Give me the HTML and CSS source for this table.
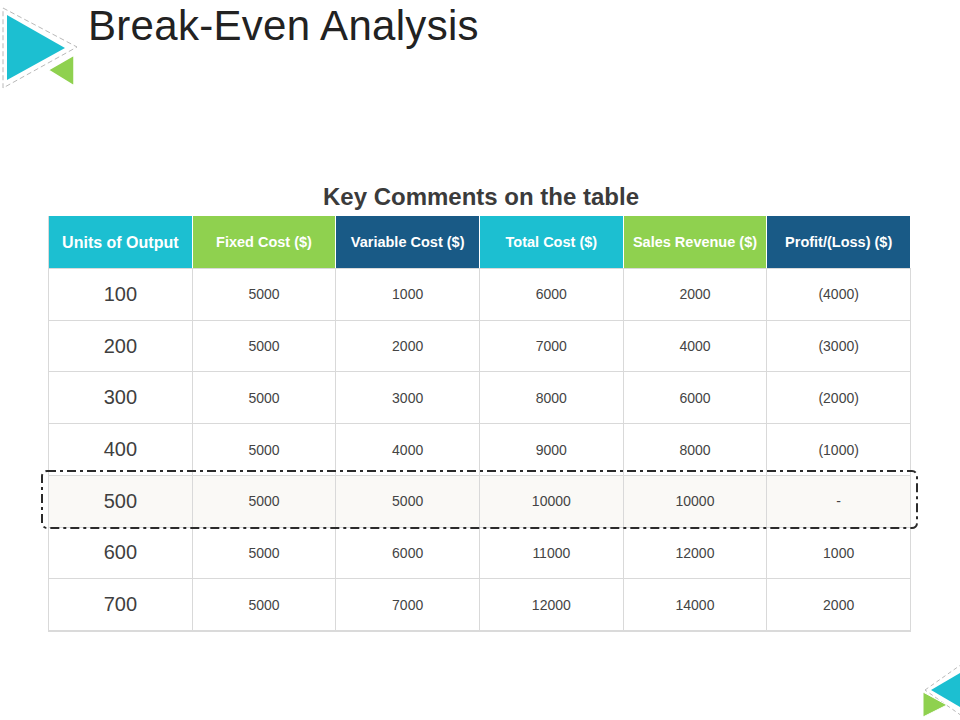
FILE: index.html
```html
<!DOCTYPE html>
<html>
<head>
<meta charset="utf-8">
<link rel="stylesheet" href="styles.css">
</head>
<body>
<div class="page">
  <header class="top">
    <svg class="logo" width="80" height="92" viewBox="0 0 80 92">
      <polygon points="3,8 77,47 3,88" fill="none" stroke="#b9b9b9" stroke-width="1" stroke-dasharray="5 3"/>
      <polygon points="7,15 65,48 7,80" fill="#1cbfd1"/>
      <polygon points="48,70 74,55 74,86" fill="#8fd14f" stroke="#fff" stroke-width="1.5"/>
    </svg>
    <h1 class="title">Break-Even Analysis</h1>
  </header>

  <section class="content">
    <h2 class="subtitle">Key Comments on the table</h2>
    <div class="table-wrap">
      <div class="grid">
        <div class="th cyan big">Units of Output</div>
        <div class="th green">Fixed Cost ($)</div>
        <div class="th navy">Variable Cost ($)</div>
        <div class="th cyan">Total Cost ($)</div>
        <div class="th green">Sales Revenue ($)</div>
        <div class="th navy">Profit/(Loss) ($)</div>

        <div class="td unit">100</div><div class="td">5000</div><div class="td">1000</div><div class="td">6000</div><div class="td">2000</div><div class="td">(4000)</div>
        <div class="td unit">200</div><div class="td">5000</div><div class="td">2000</div><div class="td">7000</div><div class="td">4000</div><div class="td">(3000)</div>
        <div class="td unit">300</div><div class="td">5000</div><div class="td">3000</div><div class="td">8000</div><div class="td">6000</div><div class="td">(2000)</div>
        <div class="td unit">400</div><div class="td">5000</div><div class="td">4000</div><div class="td">9000</div><div class="td">8000</div><div class="td">(1000)</div>
        <div class="td unit hl">500</div><div class="td hl">5000</div><div class="td hl">5000</div><div class="td hl">10000</div><div class="td hl">10000</div><div class="td hl">-</div>
        <div class="td unit">600</div><div class="td">5000</div><div class="td">6000</div><div class="td">11000</div><div class="td">12000</div><div class="td">1000</div>
        <div class="td unit">700</div><div class="td">5000</div><div class="td">7000</div><div class="td">12000</div><div class="td">14000</div><div class="td">2000</div>
      </div>
      <svg class="highlight" width="877" height="59" viewBox="0 0 877 59">
        <rect x="1" y="1" width="875" height="57" rx="5" ry="5" fill="none" stroke="#2b2b2b" stroke-width="2" stroke-dasharray="9 4 3 4"/>
      </svg>
    </div>
  </section>

  <footer class="bottom">
    <svg class="logo-small" width="40" height="65" viewBox="0 0 40 65">
      <polygon points="5,35 42,9 42,61" fill="none" stroke="#b9b9b9" stroke-width="1" stroke-dasharray="4 3"/>
      <polygon points="11,35 40,18 40,52" fill="#1cbfd1"/>
      <polygon points="3,37 27,50 3,62" fill="#8fd14f" stroke="#fff" stroke-width="1"/>
    </svg>
  </footer>
</div>
</body>
</html>
```

FILE: styles.css
```css
html, body {
  margin: 0;
  padding: 0;
  background: #ffffff;
}

.page {
  width: 960px;
  height: 720px;
  display: flex;
  flex-direction: column;
  overflow: hidden;
  font-family: "Liberation Sans", Arial, sans-serif;
}

.top {
  display: flex;
  align-items: flex-start;
  gap: 8px;
  height: 92px;
}

.logo {
  display: block;
  flex: none;
}

.title {
  margin: 0;
  padding-top: 4px;
  font-size: 42px;
  line-height: 44px;
  font-weight: normal;
  color: #222222;
  letter-spacing: 0.3px;
}

.content {
  margin-top: 91px;
  padding-left: 48px;
}

.subtitle {
  margin: 0 0 5px 0;
  width: 866px;
  text-align: center;
  font-size: 24px;
  line-height: 28px;
  font-weight: bold;
  color: #3b3b3b;
}

.table-wrap {
  position: relative;
  width: 863px;
}

.grid {
  display: grid;
  grid-template-columns: repeat(6, 1fr);
  grid-template-rows: 52px repeat(7, 51.72px);
  border-left: 1px solid #d9d9d9;
  border-bottom: 2px solid #dadada;
}

.th {
  display: flex;
  align-items: center;
  justify-content: center;
  color: #ffffff;
  font-weight: bold;
  font-size: 14.5px;
  border-right: 1px solid #ffffff;
}

.th.big {
  font-size: 16px;
  padding-top: 2px;
}

.th:last-of-type {
  border-right: none;
}

.cyan { background: #1cbfd1; }
.green { background: #8fd14f; }
.navy { background: #195a86; }

.td {
  display: flex;
  align-items: center;
  justify-content: center;
  font-size: 14px;
  color: #444444;
  border-right: 1px solid #d9d9d9;
  border-top: 1px solid #d9d9d9;
}

.td.unit {
  font-size: 20px;
  color: #3f3f3f;
}

.td.hl {
  background: #faf9f6;
}

.highlight {
  position: absolute;
  left: -7px;
  top: 254px;
  display: block;
  pointer-events: none;
}

.bottom {
  margin-top: auto;
  display: flex;
  justify-content: flex-end;
}

.logo-small {
  display: block;
}
```
